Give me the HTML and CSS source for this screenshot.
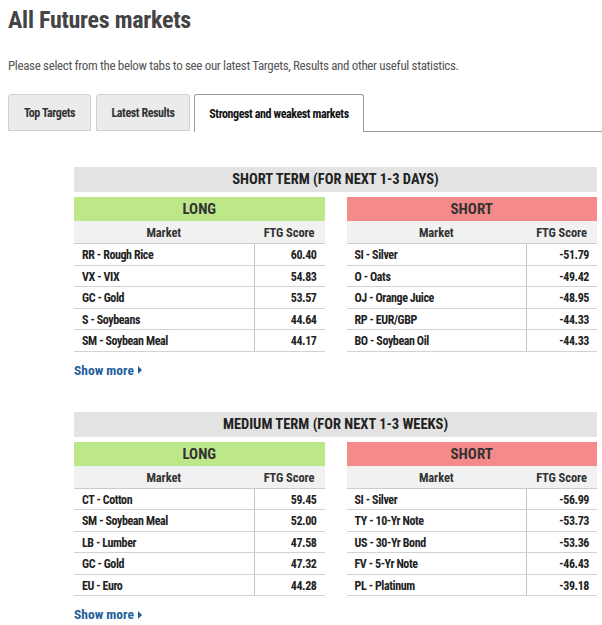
FILE: index.html
```html
<!DOCTYPE html>
<html>
<head>
<meta charset="utf-8">
<title>All Futures markets</title>
<link rel="stylesheet" href="styles.css">
</head>
<body>
<div class="page">
  <h1 class="title">All Futures markets</h1>
  <p class="intro">Please select from the below tabs to see our latest Targets, Results and other useful statistics.</p>
  <div class="tabs">
    <div class="tab tab-targets">Top Targets</div>
    <div class="tab tab-results">Latest Results</div>
    <div class="tab tab-active">Strongest and weakest markets</div>
    <div class="tab-fill"></div>
  </div>
  <div class="content">
    <section class="term">
      <div class="term-head">SHORT TERM (FOR NEXT 1-3 DAYS)</div>
      <div class="term-tables">
        <div class="mtable">
          <div class="side side-long">LONG</div>
          <div class="mrow colhead"><span>Market</span><span>FTG Score</span></div>
          <div class="mrow"><span class="name">RR - Rough Rice</span><span class="score">60.40</span></div>
          <div class="mrow"><span class="name">VX - VIX</span><span class="score">54.83</span></div>
          <div class="mrow"><span class="name">GC - Gold</span><span class="score">53.57</span></div>
          <div class="mrow"><span class="name">S - Soybeans</span><span class="score">44.64</span></div>
          <div class="mrow"><span class="name">SM - Soybean Meal</span><span class="score">44.17</span></div>
        </div>
        <div class="mtable">
          <div class="side side-short">SHORT</div>
          <div class="mrow colhead"><span>Market</span><span>FTG Score</span></div>
          <div class="mrow"><span class="name">SI - Silver</span><span class="score">-51.79</span></div>
          <div class="mrow"><span class="name">O - Oats</span><span class="score">-49.42</span></div>
          <div class="mrow"><span class="name">OJ - Orange Juice</span><span class="score">-48.95</span></div>
          <div class="mrow"><span class="name">RP - EUR/GBP</span><span class="score">-44.33</span></div>
          <div class="mrow"><span class="name">BO - Soybean Oil</span><span class="score">-44.33</span></div>
        </div>
      </div>
      <a class="more" href="#">Show more<span class="arrow"></span></a>
    </section>
    <section class="term">
      <div class="term-head">MEDIUM TERM (FOR NEXT 1-3 WEEKS)</div>
      <div class="term-tables">
        <div class="mtable">
          <div class="side side-long">LONG</div>
          <div class="mrow colhead"><span>Market</span><span>FTG Score</span></div>
          <div class="mrow"><span class="name">CT - Cotton</span><span class="score">59.45</span></div>
          <div class="mrow"><span class="name">SM - Soybean Meal</span><span class="score">52.00</span></div>
          <div class="mrow"><span class="name">LB - Lumber</span><span class="score">47.58</span></div>
          <div class="mrow"><span class="name">GC - Gold</span><span class="score">47.32</span></div>
          <div class="mrow"><span class="name">EU - Euro</span><span class="score">44.28</span></div>
        </div>
        <div class="mtable">
          <div class="side side-short">SHORT</div>
          <div class="mrow colhead"><span>Market</span><span>FTG Score</span></div>
          <div class="mrow"><span class="name">SI - Silver</span><span class="score">-56.99</span></div>
          <div class="mrow"><span class="name">TY - 10-Yr Note</span><span class="score">-53.73</span></div>
          <div class="mrow"><span class="name">US - 30-Yr Bond</span><span class="score">-53.36</span></div>
          <div class="mrow"><span class="name">FV - 5-Yr Note</span><span class="score">-46.43</span></div>
          <div class="mrow"><span class="name">PL - Platinum</span><span class="score">-39.18</span></div>
        </div>
      </div>
      <a class="more" href="#">Show more<span class="arrow"></span></a>
    </section>
  </div>
</div>
</body>
</html>
```
FILE: styles.css
```css
* { box-sizing: border-box; }

body {
  margin: 0;
  background: #ffffff;
  font-family: "Liberation Sans Narrow", "Roboto Condensed", "DejaVu Sans Condensed", "Liberation Sans", sans-serif;
  color: #222;
}

.page {
  padding-left: 8px;
}

.title {
  margin: 6px 0 0;
  font-size: 24px;
  line-height: 28px;
  font-weight: bold;
  letter-spacing: -0.25px;
  color: #444;
}

.intro {
  margin: 24px 0 0;
  font-size: 13px;
  line-height: 16px;
  letter-spacing: -0.35px;
  color: #555;
}

.tabs {
  margin-top: 20px;
  display: flex;
  align-items: flex-end;
  height: 38px;
}

.tab {
  height: 37px;
  border: 1px solid #cfcfcf;
  border-radius: 3px 3px 0 0;
  background: #ebebeb;
  font-size: 12px;
  font-weight: bold;
  letter-spacing: -0.4px;
  color: #333;
  display: flex;
  align-items: center;
  justify-content: center;
  margin-bottom: 1px;
}

.tab-targets { width: 83px; margin-right: 5px; }
.tab-results { width: 94px; margin-right: 4px; }

.tab-active {
  width: 170px;
  height: 38px;
  margin-bottom: 0;
  background: #fff;
  border-color: #9a9a9a;
  border-bottom: none;
  color: #111;
}

.tab-fill {
  flex: 1;
  border-bottom: 1px solid #9a9a9a;
  margin-bottom: 0;
}

.content {
  padding: 35px 5px 0 66px;
}

.term + .term {
  margin-top: 33px;
}

.term-head {
  height: 25px;
  line-height: 26px;
  background: #e3e3e3;
  text-align: center;
  font-size: 14.5px;
  font-weight: bold;
  color: #222;
}

.term-tables {
  margin-top: 5px;
  display: flex;
  gap: 22px;
}

.mtable {
  flex: 1;
}

.side {
  height: 24px;
  line-height: 25px;
  text-align: center;
  font-size: 15px;
  font-weight: bold;
  color: #333;
}

.side-long { background: #bde88a; }
.side-short { background: #f58a8a; }

.mrow {
  display: grid;
  grid-template-columns: 1fr 71px;
  height: 21.5px;
  border-bottom: 1px solid #d2d2d2;
  font-size: 12px;
  font-weight: bold;
  letter-spacing: -0.4px;
  color: #222;
}

.mrow span {
  display: flex;
  align-items: center;
  padding-top: 2px;
}

.name {
  padding-left: 8px;
}

.score {
  justify-content: flex-end;
  padding-right: 8px;
  border-left: 1px solid #c6c6c6;
}

.mrow.colhead {
  height: 23px;
  background: #f1f1f1;
  border-bottom: 1px solid #cbcbcb;
  font-size: 12.5px;
  letter-spacing: -0.1px;
  color: #333;
}

.colhead span {
  justify-content: center;
  padding-top: 1px;
}

.more {
  display: inline-flex;
  align-items: center;
  margin-top: 9px;
  height: 18px;
  font-size: 13.5px;
  font-weight: bold;
  color: #1f5f9b;
  text-decoration: none;
}

.arrow {
  display: inline-block;
  width: 0;
  height: 0;
  margin-left: 4px;
  margin-top: 1px;
  border-left: 4.5px solid #1f5f9b;
  border-top: 4px solid transparent;
  border-bottom: 4px solid transparent;
}
```
